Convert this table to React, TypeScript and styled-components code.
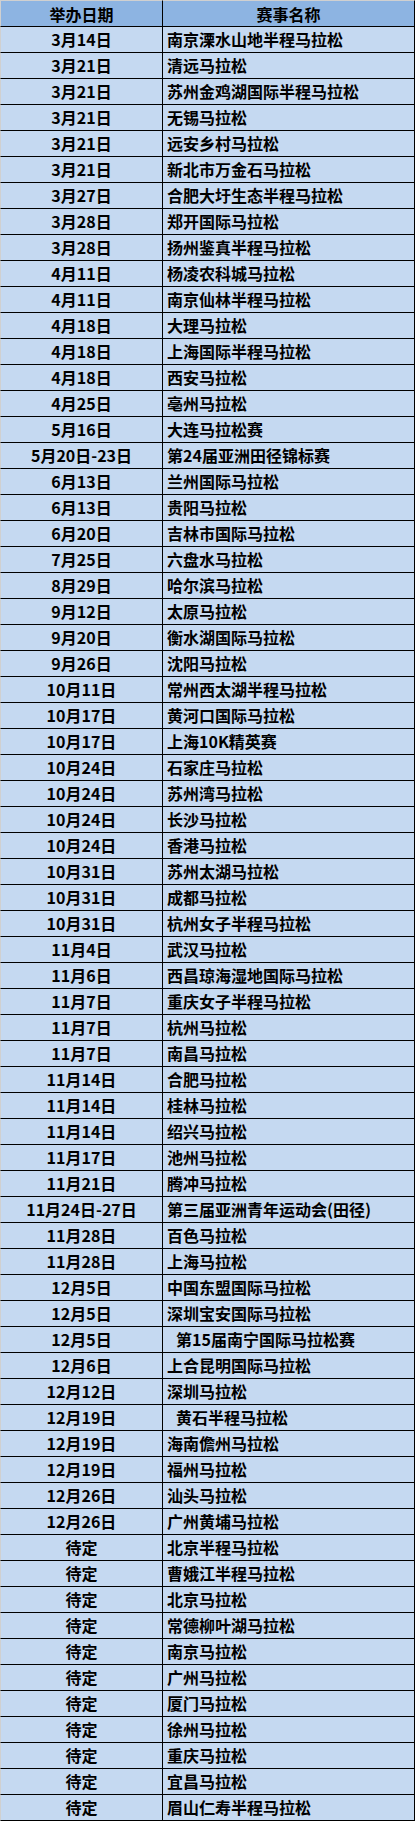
import styled, { createGlobalStyle } from 'styled-components';

const races: [string, string, boolean?][] = [
    ['3月14日', '南京溧水山地半程马拉松'],
    ['3月21日', '清远马拉松'],
    ['3月21日', '苏州金鸡湖国际半程马拉松'],
    ['3月21日', '无锡马拉松'],
    ['3月21日', '远安乡村马拉松'],
    ['3月21日', '新北市万金石马拉松'],
    ['3月27日', '合肥大圩生态半程马拉松'],
    ['3月28日', '郑开国际马拉松'],
    ['3月28日', '扬州鉴真半程马拉松'],
    ['4月11日', '杨凌农科城马拉松'],
    ['4月11日', '南京仙林半程马拉松'],
    ['4月18日', '大理马拉松'],
    ['4月18日', '上海国际半程马拉松'],
    ['4月18日', '西安马拉松'],
    ['4月25日', '亳州马拉松'],
    ['5月16日', '大连马拉松赛'],
    ['5月20日-23日', '第24届亚洲田径锦标赛'],
    ['6月13日', '兰州国际马拉松'],
    ['6月13日', '贵阳马拉松'],
    ['6月20日', '吉林市国际马拉松'],
    ['7月25日', '六盘水马拉松'],
    ['8月29日', '哈尔滨马拉松'],
    ['9月12日', '太原马拉松'],
    ['9月20日', '衡水湖国际马拉松'],
    ['9月26日', '沈阳马拉松'],
    ['10月11日', '常州西太湖半程马拉松'],
    ['10月17日', '黄河口国际马拉松'],
    ['10月17日', '上海10K精英赛'],
    ['10月24日', '石家庄马拉松'],
    ['10月24日', '苏州湾马拉松'],
    ['10月24日', '长沙马拉松'],
    ['10月24日', '香港马拉松'],
    ['10月31日', '苏州太湖马拉松'],
    ['10月31日', '成都马拉松'],
    ['10月31日', '杭州女子半程马拉松'],
    ['11月4日', '武汉马拉松'],
    ['11月6日', '西昌琼海湿地国际马拉松'],
    ['11月7日', '重庆女子半程马拉松'],
    ['11月7日', '杭州马拉松'],
    ['11月7日', '南昌马拉松'],
    ['11月14日', '合肥马拉松'],
    ['11月14日', '桂林马拉松'],
    ['11月14日', '绍兴马拉松'],
    ['11月17日', '池州马拉松'],
    ['11月21日', '腾冲马拉松'],
    ['11月24日-27日', '第三届亚洲青年运动会(田径)'],
    ['11月28日', '百色马拉松'],
    ['11月28日', '上海马拉松'],
    ['12月5日', '中国东盟国际马拉松'],
    ['12月5日', '深圳宝安国际马拉松'],
    ['12月5日', '第15届南宁国际马拉松赛', true],
    ['12月6日', '上合昆明国际马拉松'],
    ['12月12日', '深圳马拉松'],
    ['12月19日', '黄石半程马拉松', true],
    ['12月19日', '海南儋州马拉松'],
    ['12月19日', '福州马拉松'],
    ['12月26日', '汕头马拉松'],
    ['12月26日', '广州黄埔马拉松'],
    ['待定', '北京半程马拉松'],
    ['待定', '曹娥江半程马拉松'],
    ['待定', '北京马拉松'],
    ['待定', '常德柳叶湖马拉松'],
    ['待定', '南京马拉松'],
    ['待定', '广州马拉松'],
    ['待定', '厦门马拉松'],
    ['待定', '徐州马拉松'],
    ['待定', '重庆马拉松'],
    ['待定', '宜昌马拉松'],
    ['待定', '眉山仁寿半程马拉松'],
];

const App = () => {
    return (
        <>
            <GlobalStyle />
            <Table>
                <thead>
                    <tr>
                        <HeadCell $first>举办日期</HeadCell>
                        <HeadCell>赛事名称</HeadCell>
                    </tr>
                </thead>
                <tbody>
                    {races.map(([date, name, indent], i) => (
                        <tr key={i}>
                            <DateCell>{date}</DateCell>
                            <NameCell $indent={!!indent}>{name}</NameCell>
                        </tr>
                    ))}
                </tbody>
            </Table>
        </>
    );
};

const GlobalStyle = createGlobalStyle`
    html, body {
        margin: 0;
        padding: 0;
        background: #ffffff;
    }
    body {
        font-family: "Noto Sans CJK SC", "Liberation Sans", sans-serif;
    }
`;

const Table = styled.table`
    border-collapse: separate;
    border-spacing: 0;
    width: 415px;
    table-layout: fixed;
    font-size: 16px;
    font-weight: 700;
    color: #000;
`;

// header: grey top line, 25px fill, black rule below
const HeadCell = styled.th<{ $first?: boolean }>`
    height: 27px;
    padding: 0;
    box-sizing: border-box;
    background: #8db4e2;
    border-top: 1px solid #d0d0d0;
    border-bottom: 1px solid #000;
    border-right: 1px solid #000;
    border-left: ${(p) => (p.$first ? '1px solid #d0d0d0' : 'none')};
    width: ${(p) => (p.$first ? '163px' : 'auto')};
    text-align: center;
    line-height: 24px;
    font-weight: 700;
`;

const DateCell = styled.td`
    height: 26px;
    box-sizing: border-box;
    padding: 0;
    background: #c5d9f1;
    border-left: 1px solid #d0d0d0;
    border-right: 1px solid #000;
    border-bottom: 1px solid #000;
    text-align: center;
    line-height: 25px;
    white-space: nowrap;
`;

const NameCell = styled.td<{ $indent: boolean }>`
    height: 26px;
    box-sizing: border-box;
    padding: 0 0 0 ${(p) => (p.$indent ? '13px' : '4px')};
    background: #c5d9f1;
    border-right: 1px solid #000;
    border-bottom: 1px solid #000;
    text-align: left;
    line-height: 25px;
    white-space: nowrap;
`;

export default App;
